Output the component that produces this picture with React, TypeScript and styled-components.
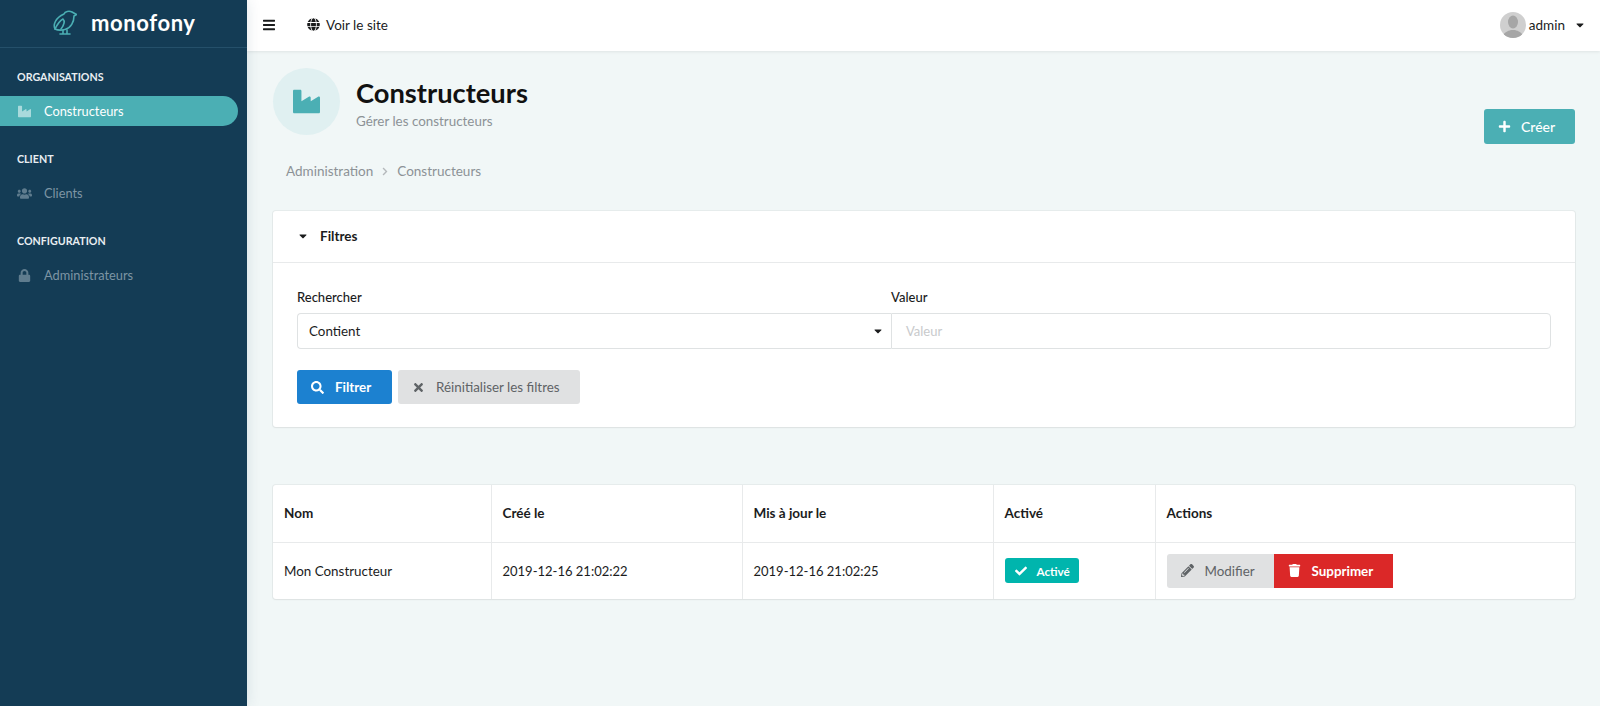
import React, { FC } from 'react';
import styled, { createGlobalStyle } from 'styled-components';
import {
  FaBars, FaCaretDown, FaCheck, FaChevronRight, FaGlobe, FaIndustry, FaLock, FaPencilAlt,
  FaPlus, FaSearch, FaTimes, FaTrash, FaUsers,
} from 'react-icons/fa';

const GlobalStyle = createGlobalStyle`
  html, body { margin: 0; padding: 0; height: 100%; overflow: hidden; }
  body { font-family: Lato, "Liberation Sans", sans-serif; font-size: 13.4px; color: #1b1c1d; background: #f1f7f7; }
  #root { height: 100%; }
  * { box-sizing: border-box; }
`;

const Page = styled.div`
  display: flex;
  height: 706px;
`;

const Sidebar = styled.aside`
  width: 247px;
  flex-shrink: 0;
  background: #143c55;
  box-shadow: 0 0 14px rgba(20, 60, 85, 0.12);
  position: relative;
  z-index: 2;
`;

const Brand = styled.div`
  height: 48px;
  display: flex;
  align-items: center;
  padding-left: 53px;
  gap: 14px;
  border-bottom: 1px solid #25506a;
  color: #fff;
  font-size: 22px;
  font-weight: 700;
  letter-spacing: 0.6px;
  padding-bottom: 2px;
`;

const Section = styled.div`
  padding-top: 22px;
  padding-bottom: 4px;
`;

const SectionTitle = styled.div`
  font-size: 10.7px;
  font-weight: 700;
  line-height: 14px;
  color: #e8eef2;
  padding-left: 17px;
  margin-bottom: 12px;
`;

const MenuItem = styled.div<{ $active?: boolean }>`
  width: 238px;
  height: 30px;
  display: flex;
  align-items: center;
  gap: 12px;
  padding-left: 17px;
  font-size: 12.8px;
  color: ${p => (p.$active ? '#fff' : '#7d95a4')};
  background: ${p => (p.$active ? '#4bafb4' : 'transparent')};
  border-radius: 0 15px 15px 0;
  svg {
    width: 15px;
    height: 13px;
    color: ${p => (p.$active ? '#a9dadc' : '#5f7c8e')};
  }
`;

const Main = styled.div`
  flex: 1;
  min-width: 0;
  display: flex;
  flex-direction: column;
`;

const TopBar = styled.header`
  height: 51px;
  flex-shrink: 0;
  background: #fff;
  box-shadow: 0 1px 3px rgba(0, 0, 0, 0.08);
  display: flex;
  align-items: center;
  padding: 0 16px 2px 16px;
  position: relative;
  z-index: 1;
`;

const MenuToggle = styled.span`
  display: flex;
  color: #1b1c1d;
  svg { width: 12px; height: 14px; }
`;

const SiteLink = styled.span`
  display: flex;
  align-items: center;
  gap: 6px;
  margin-left: 32px;
  font-size: 13.5px;
  svg { width: 13px; height: 13px; }
`;

const UserMenu = styled.div`
  margin-left: auto;
  display: flex;
  align-items: center;
  font-size: 13.5px;
`;

const Avatar = styled.svg`
  width: 26px;
  height: 26px;
  border-radius: 50%;
  margin-right: 3px;
`;

const Caret = styled(FaCaretDown)`
  width: 8px;
  height: 12px;
  margin-left: 11px;
`;

const Content = styled.main`
  padding: 17px 25px 0 26px;
`;

const HeaderRow = styled.div`
  display: flex;
  align-items: flex-start;
  justify-content: space-between;
`;

const TitleBlock = styled.div`
  display: flex;
  align-items: center;
  gap: 16px;
`;

const IconCircle = styled.div`
  width: 67px;
  height: 67px;
  border-radius: 50%;
  background: #e0f0f1;
  color: #4bafb4;
  display: flex;
  align-items: center;
  justify-content: center;
  svg { width: 27px; height: 27px; }
`;

const TitleText = styled.div`
  padding-top: 3px;
`;

const Title = styled.h1`
  margin: 0;
  font-size: 27.3px;
  line-height: 32px;
  font-weight: 700;
  color: #111;
`;

const Subtitle = styled.div`
  font-size: 13.4px;
  line-height: 18px;
  margin-top: 3px;
  color: #8c9296;
`;

const CreateButton = styled.button`
  margin-top: 41px;
  width: 91px;
  height: 35px;
  border: 0;
  border-radius: 3px;
  background: #4bafb4;
  color: #fff;
  font: 500 14px Lato, sans-serif;
  display: flex;
  align-items: center;
  padding-left: 14px;
  gap: 10px;
  svg { width: 13px; height: 13px; }
`;

const Breadcrumb = styled.nav`
  display: flex;
  align-items: center;
  margin: 17px 0 30px 13px;
  font-size: 13.5px;
  line-height: 20px;
  color: #8c9296;
  svg { width: 8px; height: 9px; margin: 0 8px; color: #b5b9bc; }
`;

const Card = styled.section`
  background: #fff;
  border-radius: 3px;
  box-shadow: 0 0 0 1px rgba(34, 36, 38, 0.05), 0 1px 2px rgba(34, 36, 38, 0.05);
`;

const FilterCard = styled(Card)`
  height: 216px;
  margin-bottom: 58px;
`;

const FilterHead = styled.div`
  height: 52px;
  display: flex;
  align-items: center;
  gap: 13px;
  padding: 0 0 2px 26px;
  border-bottom: 1px solid #e8eaeb;
  font-size: 13.5px;
  font-weight: 700;
  svg { width: 8px; height: 12px; }
`;

const FilterBody = styled.div`
  padding: 26px 24px 0;
`;

const FieldGrid = styled.div`
  display: grid;
  grid-template-columns: 594px 1fr;
`;

const Field = styled.div`
  display: flex;
  flex-direction: column;
`;

const Label = styled.label`
  font-size: 13px;
  font-weight: 500;
  line-height: 16px;
  margin-bottom: 8px;
`;

const SelectBox = styled.div`
  height: 36px;
  display: flex;
  align-items: center;
  justify-content: space-between;
  padding: 0 9px 0 11px;
  border: 1px solid #dfe2e3;
  border-right: 0;
  border-radius: 4px 0 0 4px;
  svg { width: 8px; height: 12px; }
`;

const ValueInput = styled.div`
  height: 36px;
  display: flex;
  align-items: center;
  padding-left: 14px;
  border: 1px solid #dfe2e3;
  border-radius: 0 4px 4px 0;
  font-size: 13px;
  color: #c8cacc;
`;

const FilterActions = styled.div`
  display: flex;
  gap: 6px;
  margin-top: 21px;
`;

const ActionButton = styled.button<{ $tone: 'blue' | 'grey' | 'red'; $width: number }>`
  width: ${p => p.$width}px;
  height: 34px;
  border: 0;
  border-radius: ${p => (p.$tone === 'red' ? '0' : '3px')};
  font-family: Lato, sans-serif;
  font-size: 13.4px;
  font-weight: ${p => (p.$tone === 'grey' ? 400 : 700)};
  display: flex;
  align-items: center;
  gap: 11px;
  padding: 0 0 0 14px;
  color: ${p => (p.$tone === 'grey' ? '#5f6366' : '#fff')};
  background: ${p => ({ blue: '#1c81d0', grey: '#e0e1e2', red: '#db2828' })[p.$tone]};
  svg { width: 13px; height: 13px; }
`;

const JoinedButtons = styled.div`
  display: flex;
  ${ActionButton}:first-child { border-radius: 3px 0 0 3px; }
`;

const TableCard = styled(Card)`
  overflow: hidden;
`;

const Table = styled.table`
  width: 100%;
  border-collapse: collapse;
  table-layout: fixed;
`;

const HeadCell = styled.th<{ $width?: number }>`
  width: ${p => (p.$width ? `${p.$width}px` : 'auto')};
  height: 57px;
  padding: 0 11px;
  text-align: left;
  font-weight: 700;
  font-size: 13.5px;
  border-bottom: 1px solid #e8eaeb;
  border-left: 1px solid #e8eaeb;
  &:first-child { border-left: 0; }
`;

const Cell = styled.td`
  height: 57px;
  padding: 0 11px;
  border-left: 1px solid #e8eaeb;
  &:first-child { border-left: 0; }
`;

const DateCell = styled(Cell)`
  font-size: 13px;
`;

const Badge = styled.span`
  display: inline-flex;
  align-items: center;
  gap: 10px;
  width: 74px;
  height: 25px;
  padding-left: 10px;
  border-radius: 3px;
  background: #00b5ad;
  color: #fff;
  font-size: 11.7px;
  font-weight: 700;
  vertical-align: middle;
  svg { width: 12px; height: 12px; }
`;

const App: FC = () => (
  <Page>
    <GlobalStyle />
    <Sidebar>
      <Brand>
        <svg width="24" height="25" viewBox="0 0 24 25" fill="none" stroke="#4bafb4" strokeWidth="1.6" strokeLinecap="round" strokeLinejoin="round">
          <path d="M11 4C12 1.5 16 .5 19 2l4.5 2.5L21 6c0 6-3 12-9 13.5-4 1-8 .5-10-.5C0 15 2 8 11 4z" />
          <path d="M2 19c2-4 4-8 8-10 2 2 1 6-2 10" />
          <path d="M10 20v4M14 20v4M7 24h10" />
        </svg>
        monofony
      </Brand>
      <Section>
        <SectionTitle>ORGANISATIONS</SectionTitle>
        <MenuItem $active><FaIndustry />Constructeurs</MenuItem>
      </Section>
      <Section>
        <SectionTitle>CLIENT</SectionTitle>
        <MenuItem><FaUsers />Clients</MenuItem>
      </Section>
      <Section>
        <SectionTitle>CONFIGURATION</SectionTitle>
        <MenuItem><FaLock />Administrateurs</MenuItem>
      </Section>
    </Sidebar>
    <Main>
      <TopBar>
        <MenuToggle><FaBars /></MenuToggle>
        <SiteLink><FaGlobe />Voir le site</SiteLink>
        <UserMenu>
          <Avatar viewBox="0 0 26 26">
            <rect width="26" height="26" fill="#cfcfcf" />
            <ellipse cx="13" cy="10" rx="5" ry="6.5" fill="#a6a6a6" />
            <path d="M3 26c0-6 5-7 8-8h4c3 1 8 2 8 8z" fill="#a6a6a6" />
          </Avatar>
          admin
          <Caret />
        </UserMenu>
      </TopBar>
      <Content>
        <HeaderRow>
          <TitleBlock>
            <IconCircle><FaIndustry /></IconCircle>
            <TitleText>
              <Title>Constructeurs</Title>
              <Subtitle>Gérer les constructeurs</Subtitle>
            </TitleText>
          </TitleBlock>
          <CreateButton><FaPlus />Créer</CreateButton>
        </HeaderRow>
        <Breadcrumb>Administration<FaChevronRight />Constructeurs</Breadcrumb>
        <FilterCard>
          <FilterHead><FaCaretDown />Filtres</FilterHead>
          <FilterBody>
            <FieldGrid>
              <Field>
                <Label>Rechercher</Label>
                <SelectBox>Contient<FaCaretDown /></SelectBox>
              </Field>
              <Field>
                <Label>Valeur</Label>
                <ValueInput>Valeur</ValueInput>
              </Field>
            </FieldGrid>
            <FilterActions>
              <ActionButton $tone="blue" $width={95}><FaSearch />Filtrer</ActionButton>
              <ActionButton $tone="grey" $width={182}><FaTimes />Réinitialiser les filtres</ActionButton>
            </FilterActions>
          </FilterBody>
        </FilterCard>
        <TableCard>
          <Table>
            <thead>
              <tr>
                <HeadCell $width={218}>Nom</HeadCell>
                <HeadCell $width={251}>Créé le</HeadCell>
                <HeadCell $width={251}>Mis à jour le</HeadCell>
                <HeadCell $width={162}>Activé</HeadCell>
                <HeadCell>Actions</HeadCell>
              </tr>
            </thead>
            <tbody>
              <tr>
                <Cell>Mon Constructeur</Cell>
                <DateCell>2019-12-16 21:02:22</DateCell>
                <DateCell>2019-12-16 21:02:25</DateCell>
                <Cell><Badge><FaCheck />Activé</Badge></Cell>
                <Cell>
                  <JoinedButtons>
                    <ActionButton $tone="grey" $width={107}><FaPencilAlt />Modifier</ActionButton>
                    <ActionButton $tone="red" $width={119}><FaTrash />Supprimer</ActionButton>
                  </JoinedButtons>
                </Cell>
              </tr>
            </tbody>
          </Table>
        </TableCard>
      </Content>
    </Main>
  </Page>
);

export default App;
